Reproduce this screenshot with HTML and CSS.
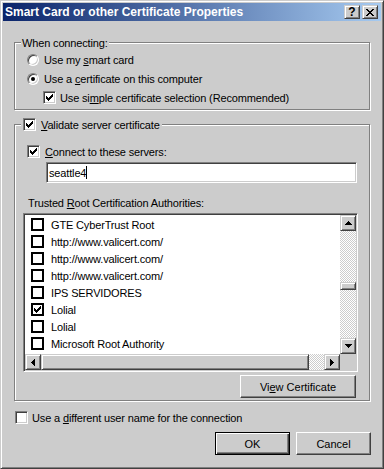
FILE: index.html
```html
<!DOCTYPE html>
<html lang="en">
<head>
    <meta charset="UTF-8">
    <title>Smart Card or other Certificate Properties</title>
    <link rel="stylesheet" href="styles.css">
</head>
<body>
    <div class="window">
        <div class="titlebar">
            <span class="title">Smart Card or other Certificate Properties</span>
            <span class="caption-btn help">?</span>
            <span class="caption-btn close">
                <svg width="8" height="7" viewBox="0 0 8 7"><path d="M0 0h2v1H0zM6 0h2v1H6zM1 1h2v1H1zM5 1h2v1H5zM2 2h4v1H2zM3 3h2v1H3zM2 4h4v1H2zM1 5h2v1H1zM5 5h2v1H5zM0 6h2v1H0zM6 6h2v1H6z"/></svg>
            </span>
        </div>

        <div class="group group-connect">
            <div class="group-title">When connecting:</div>
            <div class="option radio-row first"><span class="radio"></span><span>Use my <u>s</u>mart card</span></div>
            <div class="option radio-row"><span class="radio checked"></span><span>Use a <u>c</u>ertificate on this computer</span></div>
            <div class="option sub-row">
                <span class="check"><svg class="tick" width="7" height="7" viewBox="0 0 7 7"><path d="M0 2h1v3H0zM1 3h1v3H1zM2 4h1v3H2zM3 3h1v3H3zM4 2h1v3H4zM5 1h1v3H5zM6 0h1v3H6z"/></svg></span>
                <span>Use si<u>m</u>ple certificate selection (Recommended)</span>
            </div>
        </div>

        <div class="group group-validate">
            <div class="group-title title-check">
                <span class="check"><svg class="tick" width="7" height="7" viewBox="0 0 7 7"><path d="M0 2h1v3H0zM1 3h1v3H1zM2 4h1v3H2zM3 3h1v3H3zM4 2h1v3H4zM5 1h1v3H5zM6 0h1v3H6z"/></svg></span>
                <span><u>V</u>alidate server certificate</span>
            </div>
            <div class="option servers-row">
                <span class="check"><svg class="tick" width="7" height="7" viewBox="0 0 7 7"><path d="M0 2h1v3H0zM1 3h1v3H1zM2 4h1v3H2zM3 3h1v3H3zM4 2h1v3H4zM5 1h1v3H5zM6 0h1v3H6z"/></svg></span>
                <span><u>C</u>onnect to these servers:</span>
            </div>
            <div class="edit">seattle4<span class="caret"></span></div>
            <div class="list-label">Trusted <u>R</u>oot Certification Authorities:</div>

            <div class="list">
                <div class="list-items">
                    <div class="item"><span class="item-box"></span>GTE CyberTrust Root</div>
                    <div class="item"><span class="item-box"></span>http://www.valicert.com/</div>
                    <div class="item"><span class="item-box"></span>http://www.valicert.com/</div>
                    <div class="item"><span class="item-box"></span>http://www.valicert.com/</div>
                    <div class="item"><span class="item-box"></span>IPS SERVIDORES</div>
                    <div class="item"><span class="item-box"><svg class="tick" width="7" height="7" viewBox="0 0 7 7"><path d="M0 2h1v3H0zM1 3h1v3H1zM2 4h1v3H2zM3 3h1v3H3zM4 2h1v3H4zM5 1h1v3H5zM6 0h1v3H6z"/></svg></span>Lolial</div>
                    <div class="item"><span class="item-box"></span>Lolial</div>
                    <div class="item"><span class="item-box"></span>Microsoft Root Authority</div>
                </div>
                <div class="vscroll">
                    <span class="sb-btn"><svg width="7" height="4" viewBox="0 0 7 4"><path d="M3 0h1v1H3zM2 1h3v1H2zM1 2h5v1H1zM0 3h7v1H0z"/></svg></span>
                    <div class="track"><div class="vthumb"></div></div>
                    <span class="sb-btn"><svg width="7" height="4" viewBox="0 0 7 4"><path d="M0 0h7v1H0zM1 1h5v1H1zM2 2h3v1H2zM3 3h1v1H3z"/></svg></span>
                </div>
                <div class="hscroll">
                    <span class="sb-btn"><svg width="4" height="7" viewBox="0 0 4 7"><path d="M3 0h1v7H3zM2 1h1v5H2zM1 2h1v3H1zM0 3h1v1H0z"/></svg></span>
                    <div class="hthumb"></div>
                    <div class="track"></div>
                    <span class="sb-btn"><svg width="4" height="7" viewBox="0 0 4 7"><path d="M0 0h1v7H0zM1 1h1v5H1zM2 2h1v3H2zM3 3h1v1H3z"/></svg></span>
                </div>
                <div class="corner"></div>
            </div>

            <button class="btn view-btn">Vi<u>e</u>w Certificate</button>
        </div>

        <div class="option user-row">
            <span class="check"></span>
            <span>Use a <u>d</u>ifferent user name for the connection</span>
        </div>

        <div class="actions">
            <button class="btn default">OK</button>
            <button class="btn">Cancel</button>
        </div>
    </div>
</body>
</html>
```

FILE: styles.css
```css
* {
    box-sizing: border-box;
}
body {
    margin: 0;
    font-family: "Liberation Sans", Arial, sans-serif;
    font-size: 11px;
    letter-spacing: -0.15px;
    color: #000;
    background-color: #ccc;
}
u {
    text-underline-offset: 1px;
}
.window {
    width: 384px;
    height: 469px;
    padding: 2px;
    background-color: #ccc;
    border: 1px solid;
    border-color: #ccc #404040 #404040 #ccc;
    box-shadow: inset 1px 1px #fff, inset -1px -1px #808080;
    display: flex;
    flex-direction: column;
}
.titlebar {
    flex: none;
    height: 18px;
    display: flex;
    align-items: center;
    padding: 0 3px 0 2px;
    background: linear-gradient(to right, #0a246a, #a6caf0);
    color: #fff;
}
.title {
    flex: 1;
    font-size: 12px;
    font-weight: bold;
    letter-spacing: 0;
    white-space: nowrap;
}
.caption-btn {
    width: 16px;
    height: 14px;
    display: flex;
    align-items: center;
    justify-content: center;
    background-color: #ccc;
    color: #000;
    border: 1px solid;
    border-color: #ccc #404040 #404040 #ccc;
    box-shadow: inset 1px 1px #fff, inset -1px -1px #808080;
}
.help {
    margin-right: 2px;
    font-size: 12px;
    font-weight: bold;
    letter-spacing: 0;
}

/* group boxes */
.group {
    flex: none;
    width: 356px;
    margin-left: 11px;
    border: 1px solid #808080;
    box-shadow: inset 1px 1px #fff, 1px 1px #fff;
    display: flex;
    flex-direction: column;
    align-items: flex-start;
    padding-bottom: 2px;
}
.group-connect {
    margin-top: 21px;
}
.group-validate {
    margin-top: 14px;
}
.group-title {
    margin: -7px 0 0 6px;
    padding: 0 1px;
    height: 13px;
    background-color: #ccc;
    display: flex;
    align-items: center;
    white-space: nowrap;
}
.title-check {
    padding: 0 2px;
    gap: 5px;
}

/* option rows */
.option {
    flex: none;
    height: 19px;
    display: flex;
    align-items: center;
    gap: 5px;
    white-space: nowrap;
}
.radio-row {
    padding-left: 12px;
}
.radio-row.first {
    margin-top: 1px;
}
.sub-row {
    padding-left: 28px;
    gap: 4px;
}
.servers-row {
    margin-top: 11px;
    padding-left: 12px;
}
.user-row {
    margin: 7px 0 0 12px;
    gap: 4px;
}
.radio {
    width: 12px;
    height: 12px;
    border-radius: 50%;
    border: 1px solid;
    border-color: #808080 #fff #fff #808080;
    box-shadow: inset 1px 1px #404040, inset -1px -1px #ccc;
    background-color: #fff;
    display: flex;
    align-items: center;
    justify-content: center;
}
.radio.checked::after {
    content: "";
    width: 4px;
    height: 4px;
    border-radius: 50%;
    background-color: #000;
}
.check {
    flex: none;
    width: 13px;
    height: 13px;
    border: 1px solid;
    border-color: #808080 #fff #fff #808080;
    box-shadow: inset 1px 1px #404040, inset -1px -1px #ccc;
    background-color: #fff;
    display: flex;
    align-items: center;
    justify-content: center;
}
.tick {
    display: block;
    fill: #000;
}

/* edit + list */
.edit {
    flex: none;
    width: 311px;
    height: 21px;
    margin: 1px 0 0 31px;
    padding: 0 2px;
    border: 1px solid;
    border-color: #808080 #fff #fff #808080;
    box-shadow: inset 1px 1px #404040, inset -1px -1px #ccc;
    background-color: #fff;
    display: flex;
    align-items: center;
}
.caret {
    width: 1px;
    height: 13px;
    background-color: #000;
}
.list-label {
    flex: none;
    height: 13px;
    line-height: 13px;
    margin-top: 14px;
    padding-left: 13px;
}
.list {
    flex: none;
    width: 335px;
    height: 159px;
    margin: 3px 0 0 8px;
    padding: 1px;
    border: 1px solid;
    border-color: #808080 #fff #fff #808080;
    box-shadow: inset 1px 1px #404040, inset -1px -1px #ccc;
    background-color: #fff;
    display: grid;
    grid-template-columns: 1fr 16px;
    grid-template-rows: 1fr 16px;
}
.list-items {
    padding-top: 1px;
    overflow: hidden;
    background-color: #fff;
}
.item {
    height: 17px;
    display: flex;
    align-items: center;
    gap: 7px;
    padding-left: 6px;
    white-space: nowrap;
}
.item-box {
    width: 13px;
    height: 13px;
    border: 2px solid #000;
    background-color: #fff;
    display: flex;
    align-items: center;
    justify-content: center;
}

/* scrollbars */
.track {
    flex: 1;
    background-color: #fff;
    background-image: repeating-conic-gradient(#ccc 0% 25%, #fff 0% 50%);
    background-size: 2px 2px;
}
.vscroll {
    display: flex;
    flex-direction: column;
}
.hscroll {
    display: flex;
}
.sb-btn, .vthumb, .hthumb {
    flex: none;
    background-color: #ccc;
    border: 1px solid;
    border-color: #ccc #404040 #404040 #ccc;
    box-shadow: inset 1px 1px #fff, inset -1px -1px #808080;
}
.sb-btn {
    width: 16px;
    height: 16px;
    display: flex;
    align-items: center;
    justify-content: center;
}
.sb-btn svg {
    display: block;
    fill: #000;
}
.vthumb {
    width: 16px;
    height: 8px;
    margin-top: 51px;
}
.hthumb {
    width: 268px;
    height: 16px;
}
.corner {
    background-color: #ccc;
}

/* push buttons */
.btn {
    flex: none;
    height: 23px;
    padding: 0;
    font: inherit;
    color: #000;
    background-color: #ccc;
    border: 1px solid;
    border-color: #fff #404040 #404040 #fff;
    box-shadow: inset -1px -1px #808080;
}
.btn.default {
    border-color: #000;
    box-shadow: inset 1px 1px #fff, inset -1px -1px #404040, inset -2px -2px #808080;
}
.view-btn {
    width: 116px;
    margin: 3px 13px 0 0;
    align-self: flex-end;
}
.actions {
    flex: none;
    display: flex;
    justify-content: flex-end;
    gap: 6px;
    margin-top: 5px;
    padding-right: 10px;
}
.actions .btn {
    width: 75px;
}
```
